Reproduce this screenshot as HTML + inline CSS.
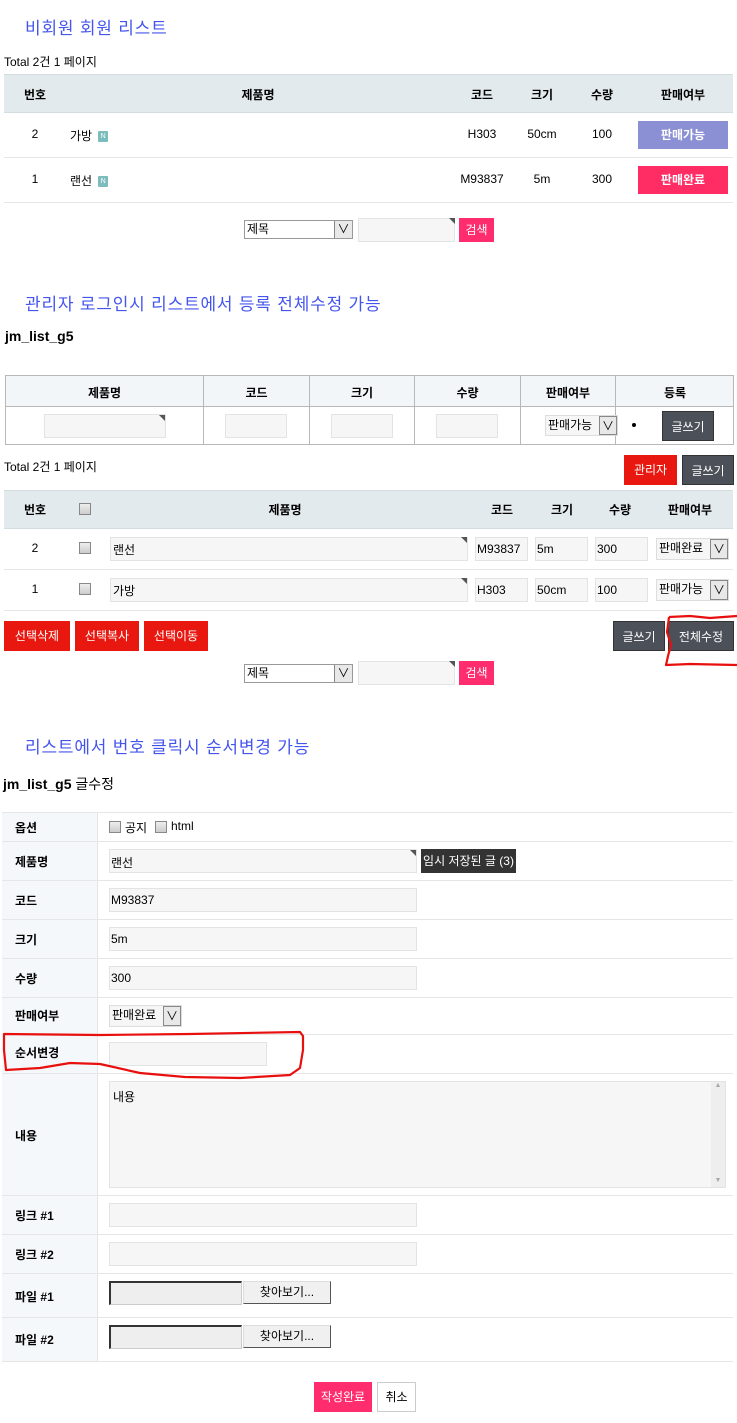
<!DOCTYPE html>
<html><head><meta charset="utf-8">
<style>
*{box-sizing:border-box;margin:0;padding:0}
body{width:737px;height:1423px;position:relative;background:#fff;font-family:"Liberation Sans","Noto Sans CJK KR","NanumGothic",sans-serif;font-size:12px;color:#000;overflow:hidden}
.a{position:absolute}
.t{font-size:17px;color:#4455ee;left:25px;letter-spacing:.8px}
.c{text-align:center}
.b{font-weight:bold}
.btn{position:absolute;color:#fff;text-align:center;font-size:12px}
.inp{position:absolute;background:#f6f6f6;border:1px solid #e0e4e4}
.sel{position:absolute;background:#fff;border:1px solid #999;font-size:12px;padding-left:2px}
.sel i{position:absolute;right:0;top:0;bottom:0;width:18px;border-left:1px solid #888;background:#e8e8e8;font-style:normal;text-align:center}
.hl{position:absolute;height:1px;background:#e6e6e6}
.cb{position:absolute;width:12px;height:12px;border:1px solid #888;background:linear-gradient(#eee,#ccc)}
.corner{position:absolute;width:0;height:0;border-top:6px solid #555;border-left:6px solid transparent}
.nic{display:inline-block;width:10px;height:11px;background:#7cbcbc;color:#fff;font-size:7px;text-align:center;line-height:11px;vertical-align:middle;margin-left:6px;border-radius:1px}
</style></head><body>

<!-- Section 1 -->
<div class="a t" style="top:14px">비회원 회원 리스트</div>
<div class="a" style="left:4px;top:53px">Total 2건 1 페이지</div>
<div class="a" style="left:4px;top:74px;width:729px;height:39px;background:#e3eaed;border-top:1px solid #d3dcdf;border-bottom:1px solid #d3dcdf"></div>
<div class="a b c" style="left:15px;top:86px;width:40px">번호</div>
<div class="a b c" style="left:218px;top:86px;width:80px">제품명</div>
<div class="a b c" style="left:462px;top:86px;width:40px">코드</div>
<div class="a b c" style="left:522px;top:86px;width:40px">크기</div>
<div class="a b c" style="left:582px;top:86px;width:40px">수량</div>
<div class="a b c" style="left:653px;top:86px;width:60px">판매여부</div>
<div class="a c" style="left:15px;top:127px;width:40px">2</div>
<div class="a" style="left:70px;top:127px">가방<span class="nic">N</span></div>
<div class="a c" style="left:462px;top:127px;width:40px">H303</div>
<div class="a c" style="left:517px;top:127px;width:50px">50cm</div>
<div class="a c" style="left:582px;top:127px;width:40px">100</div>
<div class="btn b" style="left:638px;top:121px;width:90px;height:28px;line-height:28px;background:#8b8fd3">판매가능</div>
<div class="hl" style="left:4px;top:157px;width:729px"></div>
<div class="a c" style="left:15px;top:172px;width:40px">1</div>
<div class="a" style="left:70px;top:172px">랜선<span class="nic">N</span></div>
<div class="a c" style="left:452px;top:172px;width:60px">M93837</div>
<div class="a c" style="left:522px;top:172px;width:40px">5m</div>
<div class="a c" style="left:582px;top:172px;width:40px">300</div>
<div class="btn b" style="left:638px;top:166px;width:90px;height:28px;line-height:28px;background:#ff2d64">판매완료</div>
<div class="hl" style="left:4px;top:202px;width:729px"></div>
<div class="sel" style="left:244px;top:220px;width:109px;height:19px;line-height:16px">제목<i>∨</i></div>
<div class="inp" style="left:358px;top:218px;width:97px;height:24px"></div><div class="corner" style="left:449px;top:218px"></div>
<div class="btn" style="left:459px;top:218px;width:35px;height:24px;line-height:24px;background:#ff2d6e">검색</div>

<!-- Section 2 -->
<div class="a t" style="top:290px">관리자 로그인시 리스트에서 등록 전체수정 가능</div>
<div class="a b" style="left:5px;top:328px;font-size:14px">jm_list_g5</div>
<div class="a" style="left:5px;top:375px;width:729px;height:70px;border:1px solid #b8b8b8"></div>
<div class="a" style="left:6px;top:376px;width:727px;height:31px;background:#f3f6f9;border-bottom:1px solid #b8b8b8"></div>
<div class="a" style="left:203px;top:376px;width:1px;height:68px;background:#b8b8b8"></div>
<div class="a" style="left:309px;top:376px;width:1px;height:68px;background:#b8b8b8"></div>
<div class="a" style="left:414px;top:376px;width:1px;height:68px;background:#b8b8b8"></div>
<div class="a" style="left:520px;top:376px;width:1px;height:68px;background:#b8b8b8"></div>
<div class="a" style="left:615px;top:376px;width:1px;height:68px;background:#b8b8b8"></div>
<div class="a b c" style="left:6px;top:384px;width:197px">제품명</div>
<div class="a b c" style="left:204px;top:384px;width:105px">코드</div>
<div class="a b c" style="left:310px;top:384px;width:104px">크기</div>
<div class="a b c" style="left:415px;top:384px;width:105px">수량</div>
<div class="a b c" style="left:521px;top:384px;width:94px">판매여부</div>
<div class="a b c" style="left:616px;top:384px;width:118px">등록</div>
<div class="inp" style="left:44px;top:414px;width:122px;height:24px"></div><div class="corner" style="left:159px;top:415px"></div>
<div class="inp" style="left:225px;top:414px;width:62px;height:24px"></div>
<div class="inp" style="left:331px;top:414px;width:62px;height:24px"></div>
<div class="inp" style="left:436px;top:414px;width:62px;height:24px"></div>
<div class="sel" style="left:545px;top:415px;width:73px;height:21px;line-height:19px;border-color:#ddd;background:#f6f6f6">판매가능<i style="border:1px solid #888">∨</i></div>
<div class="a" style="left:632px;top:423px;width:4px;height:4px;border-radius:2px;background:#000"></div>
<div class="btn" style="left:662px;top:411px;width:52px;height:30px;line-height:30px;background:#4b5059;border:1px solid #333">글쓰기</div>
<div class="a" style="left:4px;top:458px">Total 2건 1 페이지</div>
<div class="btn" style="left:624px;top:455px;width:53px;height:30px;line-height:30px;background:#e8170f">관리자</div>
<div class="btn" style="left:682px;top:455px;width:52px;height:30px;line-height:30px;background:#4b5059;border:1px solid #333">글쓰기</div>
<div class="a" style="left:4px;top:490px;width:729px;height:39px;background:#e3eaed;border-top:1px solid #d3dcdf;border-bottom:1px solid #d3dcdf"></div>
<div class="a b c" style="left:15px;top:501px;width:40px">번호</div>
<div class="cb" style="left:79px;top:503px"></div>
<div class="a b c" style="left:245px;top:501px;width:80px">제품명</div>
<div class="a b c" style="left:482px;top:501px;width:40px">코드</div>
<div class="a b c" style="left:542px;top:501px;width:40px">크기</div>
<div class="a b c" style="left:600px;top:501px;width:40px">수량</div>
<div class="a b c" style="left:660px;top:501px;width:60px">판매여부</div>
<!-- row 2 -->
<div class="a c" style="left:15px;top:541px;width:40px">2</div>
<div class="cb" style="left:79px;top:542px"></div>
<div class="inp" style="left:110px;top:537px;width:358px;height:24px;padding:3px 2px">랜선</div><div class="corner" style="left:461px;top:537px"></div>
<div class="inp" style="left:475px;top:537px;width:53px;height:24px;padding:4px 1px">M93837</div>
<div class="inp" style="left:535px;top:537px;width:53px;height:24px;padding:4px 1px">5m</div>
<div class="inp" style="left:595px;top:537px;width:53px;height:24px;padding:4px 1px">300</div>
<div class="sel" style="left:656px;top:538px;width:73px;height:22px;line-height:19px;border-color:#ddd;background:#f6f6f6">판매완료<i style="border:1px solid #888">∨</i></div>
<div class="hl" style="left:4px;top:569px;width:729px"></div>
<!-- row 1 -->
<div class="a c" style="left:15px;top:582px;width:40px">1</div>
<div class="cb" style="left:79px;top:583px"></div>
<div class="inp" style="left:110px;top:578px;width:358px;height:24px;padding:3px 2px">가방</div><div class="corner" style="left:461px;top:578px"></div>
<div class="inp" style="left:475px;top:578px;width:53px;height:24px;padding:4px 1px">H303</div>
<div class="inp" style="left:535px;top:578px;width:53px;height:24px;padding:4px 1px">50cm</div>
<div class="inp" style="left:595px;top:578px;width:53px;height:24px;padding:4px 1px">100</div>
<div class="sel" style="left:656px;top:579px;width:73px;height:22px;line-height:19px;border-color:#ddd;background:#f6f6f6">판매가능<i style="border:1px solid #888">∨</i></div>
<div class="hl" style="left:4px;top:610px;width:729px"></div>
<div class="btn" style="left:4px;top:621px;width:66px;height:30px;line-height:30px;background:#e8170f">선택삭제</div>
<div class="btn" style="left:75px;top:621px;width:64px;height:30px;line-height:30px;background:#e8170f">선택복사</div>
<div class="btn" style="left:144px;top:621px;width:64px;height:30px;line-height:30px;background:#e8170f">선택이동</div>
<div class="btn" style="left:613px;top:621px;width:52px;height:30px;line-height:30px;background:#4b5059;border:1px solid #333">글쓰기</div>
<div class="btn" style="left:668px;top:621px;width:66px;height:30px;line-height:30px;background:#4b5059;border:1px solid #333">전체수정</div>
<div class="sel" style="left:244px;top:664px;width:109px;height:19px;line-height:16px">제목<i>∨</i></div>
<div class="inp" style="left:358px;top:661px;width:97px;height:24px"></div><div class="corner" style="left:449px;top:661px"></div>
<div class="btn" style="left:459px;top:661px;width:35px;height:24px;line-height:24px;background:#ff2d6e">검색</div>

<!-- Section 3 -->
<div class="a t" style="top:733px">리스트에서 번호 클릭시 순서변경 가능</div>
<div class="a b" style="left:3px;top:774px;font-size:14px">jm_list_g5 <span style="font-weight:normal">글수정</span></div>
<div class="a" style="left:2px;top:812px;width:96px;height:549px;background:#f5f8fa;border-right:1px solid #e6e6e6"></div>
<div class="hl" style="left:2px;top:812px;width:731px"></div>
<div class="hl" style="left:2px;top:841px;width:731px"></div>
<div class="hl" style="left:2px;top:880px;width:731px"></div>
<div class="hl" style="left:2px;top:919px;width:731px"></div>
<div class="hl" style="left:2px;top:958px;width:731px"></div>
<div class="hl" style="left:2px;top:997px;width:731px"></div>
<div class="hl" style="left:2px;top:1034px;width:731px"></div>
<div class="hl" style="left:2px;top:1073px;width:731px"></div>
<div class="hl" style="left:2px;top:1195px;width:731px"></div>
<div class="hl" style="left:2px;top:1234px;width:731px"></div>
<div class="hl" style="left:2px;top:1273px;width:731px"></div>
<div class="hl" style="left:2px;top:1317px;width:731px"></div>
<div class="hl" style="left:2px;top:1361px;width:731px"></div>
<div class="a b" style="left:15px;top:819px">옵션</div>
<div class="a b" style="left:15px;top:853px">제품명</div>
<div class="a b" style="left:15px;top:892px">코드</div>
<div class="a b" style="left:15px;top:931px">크기</div>
<div class="a b" style="left:15px;top:970px">수량</div>
<div class="a b" style="left:15px;top:1007px">판매여부</div>
<div class="a b" style="left:15px;top:1044px">순서변경</div>
<div class="a b" style="left:15px;top:1127px">내용</div>
<div class="a b" style="left:15px;top:1207px">링크 #1</div>
<div class="a b" style="left:15px;top:1246px">링크 #2</div>
<div class="a b" style="left:15px;top:1288px">파일 #1</div>
<div class="a b" style="left:15px;top:1331px">파일 #2</div>
<div class="cb" style="left:109px;top:821px"></div><div class="a" style="left:125px;top:819px">공지</div>
<div class="cb" style="left:155px;top:821px"></div><div class="a" style="left:171px;top:819px">html</div>
<div class="inp" style="left:109px;top:849px;width:308px;height:24px;padding:4px 1px">랜선</div><div class="corner" style="left:410px;top:850px"></div>
<div class="btn" style="left:421px;top:849px;width:95px;height:24px;line-height:24px;background:#333">임시 저장된 글 (3)</div>
<div class="inp" style="left:109px;top:888px;width:308px;height:24px;padding:4px 1px">M93837</div>
<div class="inp" style="left:109px;top:927px;width:308px;height:24px;padding:4px 1px">5m</div>
<div class="inp" style="left:109px;top:966px;width:308px;height:24px;padding:4px 1px">300</div>
<div class="sel" style="left:109px;top:1005px;width:73px;height:22px;line-height:19px;border-color:#ddd;background:#f6f6f6">판매완료<i style="border:1px solid #888">∨</i></div>
<div class="inp" style="left:109px;top:1042px;width:158px;height:24px"></div>
<div class="inp" style="left:109px;top:1081px;width:617px;height:107px;padding:6px 3px">내용</div>
<div class="a" style="left:711px;top:1082px;width:14px;height:105px;background:#eee;color:#aaa;font-size:7px;text-align:center">▲<div style="position:absolute;bottom:3px;width:14px">▼</div></div>
<div class="inp" style="left:109px;top:1203px;width:308px;height:24px"></div>
<div class="inp" style="left:109px;top:1242px;width:308px;height:24px"></div>
<div class="a" style="left:109px;top:1281px;width:133px;height:24px;background:#eee;border:1px solid #ccc;border-top:2px solid #333;border-left:2px solid #333"></div>
<div class="a c" style="left:243px;top:1281px;width:88px;height:23px;line-height:21px;background:#f0f0f0;border:1px solid #555;border-top-color:#ddd;border-left-color:#ddd">찾아보기...</div>
<div class="a" style="left:109px;top:1325px;width:133px;height:24px;background:#eee;border:1px solid #ccc;border-top:2px solid #333;border-left:2px solid #333"></div>
<div class="a c" style="left:243px;top:1325px;width:88px;height:23px;line-height:21px;background:#f0f0f0;border:1px solid #555;border-top-color:#ddd;border-left-color:#ddd">찾아보기...</div>
<div class="btn" style="left:314px;top:1382px;width:58px;height:30px;line-height:30px;background:#ff2d6e">작성완료</div>
<div class="a c" style="left:377px;top:1382px;width:39px;height:30px;line-height:28px;border:1px solid #ccc;background:#fff">취소</div>

<!-- red annotations -->
<svg class="a" style="left:0;top:0" width="737" height="1423" fill="none" stroke="#e8100e" stroke-width="2.2" stroke-linejoin="round">
<path d="M669,617 L690,616 L710,618 L737,616 M669,617 L667,632 L671,645 L668,656 L666,665 L690,664 L737,665"/>
<path d="M4,1034 L100,1035 L190,1034 L300,1032 L303,1036 L303,1050 L300,1068 L290,1075 L240,1078 L185,1077 L140,1073 L100,1064 L70,1063 L40,1068 L6,1070 L4,1050 Z"/>
</svg>
</body></html>
